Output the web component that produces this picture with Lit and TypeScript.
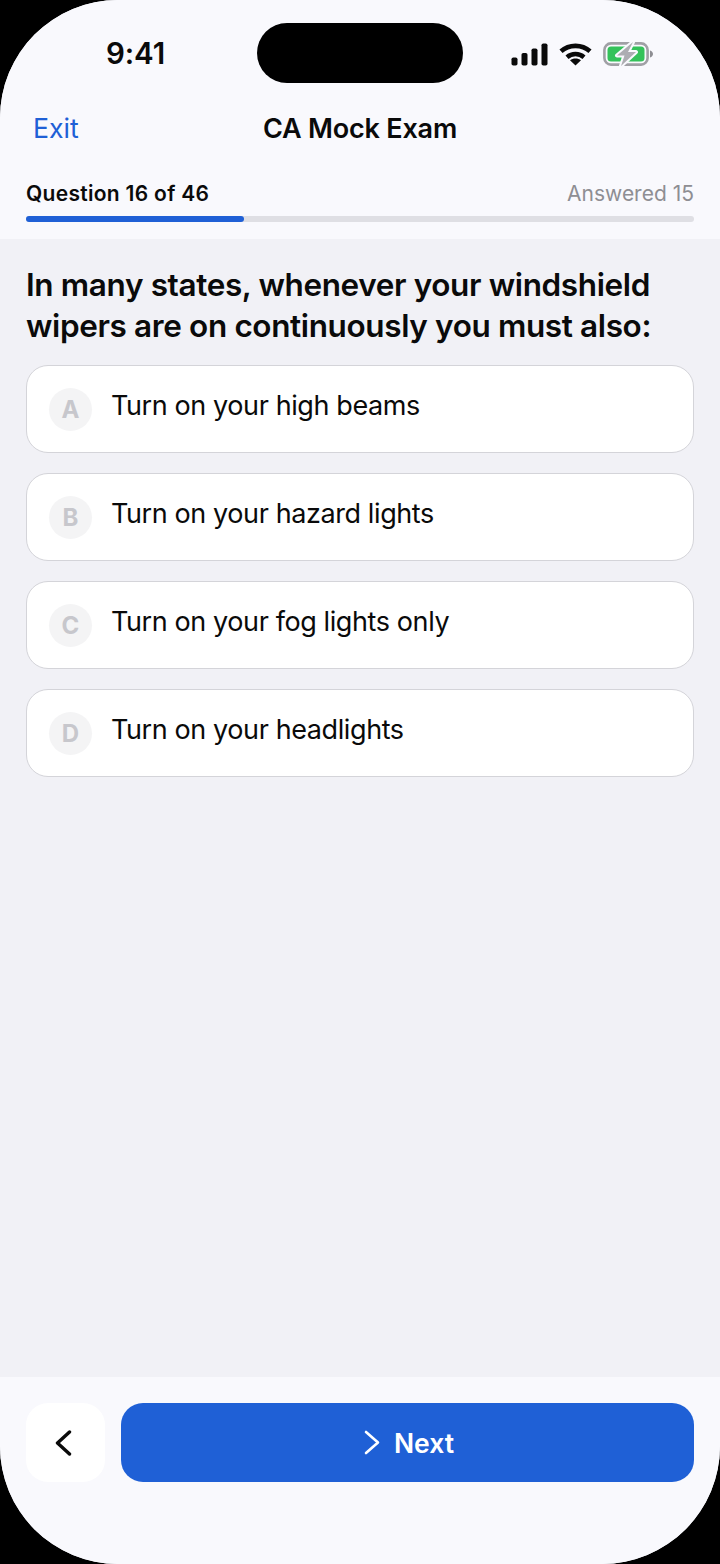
import { LitElement, html, css } from "lit";
import { customElement } from "lit/decorators.js";

const OPTIONS = [
  ["A", "Turn on your high beams"],
  ["B", "Turn on your hazard lights"],
  ["C", "Turn on your fog lights only"],
  ["D", "Turn on your headlights"],
];

@customElement("app-root")
export class AppRoot extends LitElement {
  static styles = css`
    :host { display: block; width: 720px; height: 1564px; background: #000; font-family: Inter, "Liberation Sans", sans-serif; color: #0a0a0a; }
    .phone { position: relative; width: 720px; height: 1564px; border-radius: 118px; overflow: hidden; background: #f1f1f6; display: flex; flex-direction: column; }
    .island { position: absolute; left: 257px; top: 23px; width: 206px; height: 60px; border-radius: 30px; background: #000; }
    header { background: #f9f9fd; height: 239px; box-sizing: border-box; display: flex; flex-direction: column; flex: none; }
    .status { height: 100px; flex: none; display: flex; align-items: flex-start; justify-content: space-between; padding: 35px 66px 0 106px; box-sizing: border-box; }
    .time { font-size: 29.5px; line-height: 36px; font-weight: 600; letter-spacing: -0.1px; }
    .icons { display: flex; align-items: center; gap: 11px; padding-top: 6px; }
    .icons svg { display: block; }
    .nav { position: relative; height: 56px; flex: none; display: flex; align-items: center; justify-content: center; }
    .exit { position: absolute; left: 33px; top: 0; line-height: 56px; font-size: 26.7px; color: #1f60d6; }
    .title { font-size: 27px; font-weight: 600; letter-spacing: -0.2px; }
    .meta { display: flex; justify-content: space-between; padding: 24px 26px 0; line-height: 27px; font-size: 21px; }
    .q { font-weight: 600; letter-spacing: 0.3px; }
    .ans { color: #8e8e93; }
    .track { margin: 9px 26px 0; height: 6px; border-radius: 3px; background: #dfdfe4; }
    .fill { height: 6px; border-radius: 3px; background: #1f60d6; }
    main { flex: 1; padding: 25px 26px 0; }
    h1 { margin: 0 0 19px; font-size: 31.5px; line-height: 41px; font-weight: 600; letter-spacing: -0.37px; }
    .opts { display: flex; flex-direction: column; gap: 20px; }
    .opt { height: 88px; box-sizing: border-box; display: flex; align-items: center; gap: 19px; padding: 0 22px; background: #fff; border: 1px solid #d4d4d9; border-radius: 22px; }
    .badge { width: 43px; height: 43px; border-radius: 50%; background: #f4f4f5; color: #c7c7cc; font-size: 24px; font-weight: 700; display: flex; align-items: center; justify-content: center; flex: none; }
    .txt { font-size: 27px; line-height: 34px; margin-top: -7px; letter-spacing: -0.4px; }
    footer { height: 187px; flex: none; box-sizing: border-box; background: #f9f9fd; padding: 26px 26px 0; display: flex; gap: 16px; align-items: flex-start; }
    .back { width: 79px; height: 79px; flex: none; border: 0; padding: 0 5px 0 0; border-radius: 22px; background: #fff; display: flex; align-items: center; justify-content: center; }
    .next { flex: 1; height: 79px; border: 0; padding: 0 0 0 3px; border-radius: 22px; background: #1f60d6; color: #fff; font: inherit; font-size: 26.5px; font-weight: 600; display: flex; align-items: center; justify-content: center; gap: 14px; }
  `;

  render() {
    return html`
      <div class="phone">
        <div class="island"></div>
        <header>
          <div class="status">
            <span class="time">9:41</span>
            <div class="icons">
              <svg width="37" height="23" viewBox="0 0 37 23" fill="#0a0a0a">
                <rect x="0.5" y="14.5" width="6" height="8" rx="1.8"/>
                <rect x="10.5" y="10" width="6" height="12.5" rx="1.8"/>
                <rect x="20.5" y="5.5" width="6" height="17" rx="1.8"/>
                <rect x="30.5" y="0.5" width="6" height="22" rx="1.8"/>
              </svg>
              <svg width="33" height="24" viewBox="0 0 33 24" fill="none" stroke="#0a0a0a" stroke-width="4.6">
                <path d="M2 9.3C10 2 23 2 31 9.3"/>
                <path d="M8 15.2C12.8 11 20.2 11 25 15.2"/>
                <path d="M16.5 23.5L11 18.3C14 15.9 19 15.9 22 18.3Z" fill="#0a0a0a" stroke="none"/>
              </svg>
              <svg width="51" height="26" viewBox="0 0 51 26" fill="none">
                <rect x="1.4" y="2.4" width="43.2" height="21.2" rx="6.5" stroke="#a0a0a5" stroke-width="2.6"/>
                <rect x="4.5" y="5.5" width="37" height="15" rx="3.5" fill="#34c25a"/>
                <path d="M47 9.5c2 .6 3 2 3 3.5s-1 2.9-3 3.5Z" fill="#8e8e93"/>
                <path d="M30 1L14 14.5H21.5L18 25L33 11H25Z" fill="#adadb2" stroke="#f9f9fd" stroke-width="4" paint-order="stroke" stroke-linejoin="round"/>
              </svg>
            </div>
          </div>
          <div class="nav">
            <span class="exit">Exit</span>
            <span class="title">CA Mock Exam</span>
          </div>
          <div class="meta">
            <span class="q">Question 16 of 46</span>
            <span class="ans">Answered 15</span>
          </div>
          <div class="track"><div class="fill" style="width:${(15 / 46) * 100}%"></div></div>
        </header>
        <main>
          <h1>In many states, whenever your windshield wipers are on continuously you must also:</h1>
          <div class="opts">
            ${OPTIONS.map(([l, t]) => html`
              <div class="opt"><span class="badge">${l}</span><span class="txt">${t}</span></div>
            `)}
          </div>
        </main>
        <footer>
          <button class="back" aria-label="Back">
            <svg width="17" height="26" viewBox="0 0 17 26" fill="none" stroke="#0a0a0a" stroke-width="3.4" stroke-linecap="round" stroke-linejoin="round"><path d="M14.5 2L2.5 13L14.5 24"/></svg>
          </button>
          <button class="next">
            <svg width="16" height="25" viewBox="0 0 16 25" fill="none" stroke="#fff" stroke-width="2.6" stroke-linecap="round" stroke-linejoin="round"><path d="M2 2L14 12.5L2 23"/></svg>
            <span>Next</span>
          </button>
        </footer>
      </div>
    `;
  }
}
